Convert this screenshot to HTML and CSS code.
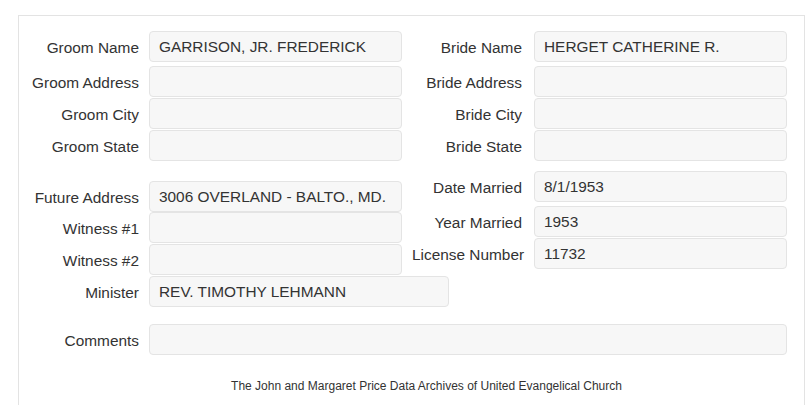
FILE: index.html
```html
<!DOCTYPE html>
<html lang="en">
<head>
  <meta charset="UTF-8">
  <meta name="viewport" content="width=device-width, initial-scale=1.0">
  <title>Marriage Record</title>
  <link rel="stylesheet" href="styles.css">
</head>
<body>
  <div class="record">
    <div class="cols">
      <div class="col left">
        <div class="field first"><label>Groom Name</label><div class="value">GARRISON, JR. FREDERICK</div></div>
        <div class="field"><label>Groom Address</label><div class="value"></div></div>
        <div class="field"><label>Groom City</label><div class="value"></div></div>
        <div class="field"><label>Groom State</label><div class="value"></div></div>
        <div class="field group-left"><label>Future Address</label><div class="value">3006 OVERLAND - BALTO., MD.</div></div>
        <div class="field tight"><label>Witness #1</label><div class="value"></div></div>
        <div class="field"><label>Witness #2</label><div class="value"></div></div>
        <div class="field"><label>Minister</label><div class="value wide">REV. TIMOTHY LEHMANN</div></div>
      </div>
      <div class="col right">
        <div class="field first"><label>Bride Name</label><div class="value">HERGET CATHERINE R.</div></div>
        <div class="field"><label>Bride Address</label><div class="value"></div></div>
        <div class="field"><label>Bride City</label><div class="value"></div></div>
        <div class="field"><label>Bride State</label><div class="value"></div></div>
        <div class="field first group-right"><label>Date Married</label><div class="value">8/1/1953</div></div>
        <div class="field"><label>Year Married</label><div class="value">1953</div></div>
        <div class="field"><label>License Number</label><div class="value">11732</div></div>
      </div>
    </div>
    <div class="field comments"><label>Comments</label><div class="value full"></div></div>
    <div class="footer">The John and Margaret Price Data Archives of United Evangelical Church</div>
  </div>
</body>
</html>
```

FILE: styles.css
```css
body { margin: 0; font-family: "Liberation Sans", Arial, sans-serif; color: #333; background: #fff; }
.record { box-sizing: border-box; width: 787px; margin: 15px 0 0 18px; padding-top: 15px; border: 1px solid #e3e3e3; border-bottom: none; height: 400px; }
.cols { display: flex; }
.col { display: flex; flex-direction: column; gap: 1px; }
.col.left { width: 383px; flex-shrink: 0; }
.field { display: flex; align-items: center; height: 31px; font-size: 15.4px; }
.field label { flex-shrink: 0; white-space: nowrap; text-align: right; padding-top: 3px; }
.left label, .comments label { width: 120px; margin-right: 10px; }
.right label { width: 110px; margin-left: 10px; margin-right: 12px; }
.value { flex-shrink: 0; box-sizing: border-box; width: 253px; height: 31px; line-height: 29px; padding-left: 9px; background: #f7f7f7; border: 1px solid #e4e4e4; border-radius: 4px; white-space: nowrap; overflow: hidden; }
.value.wide { width: 300px; }
.value.full { width: 638px; }
.field.first { margin-bottom: 3px; }
.field.group-left { margin-top: 19px; }
.field.group-right { margin-top: 9px; }
.field.tight { margin-top: -1px; }
.comments { margin-top: 17px; }
.footer { margin-top: 23px; padding-left: 30px; text-align: center; font-size: 12px; line-height: 16px; }
```
